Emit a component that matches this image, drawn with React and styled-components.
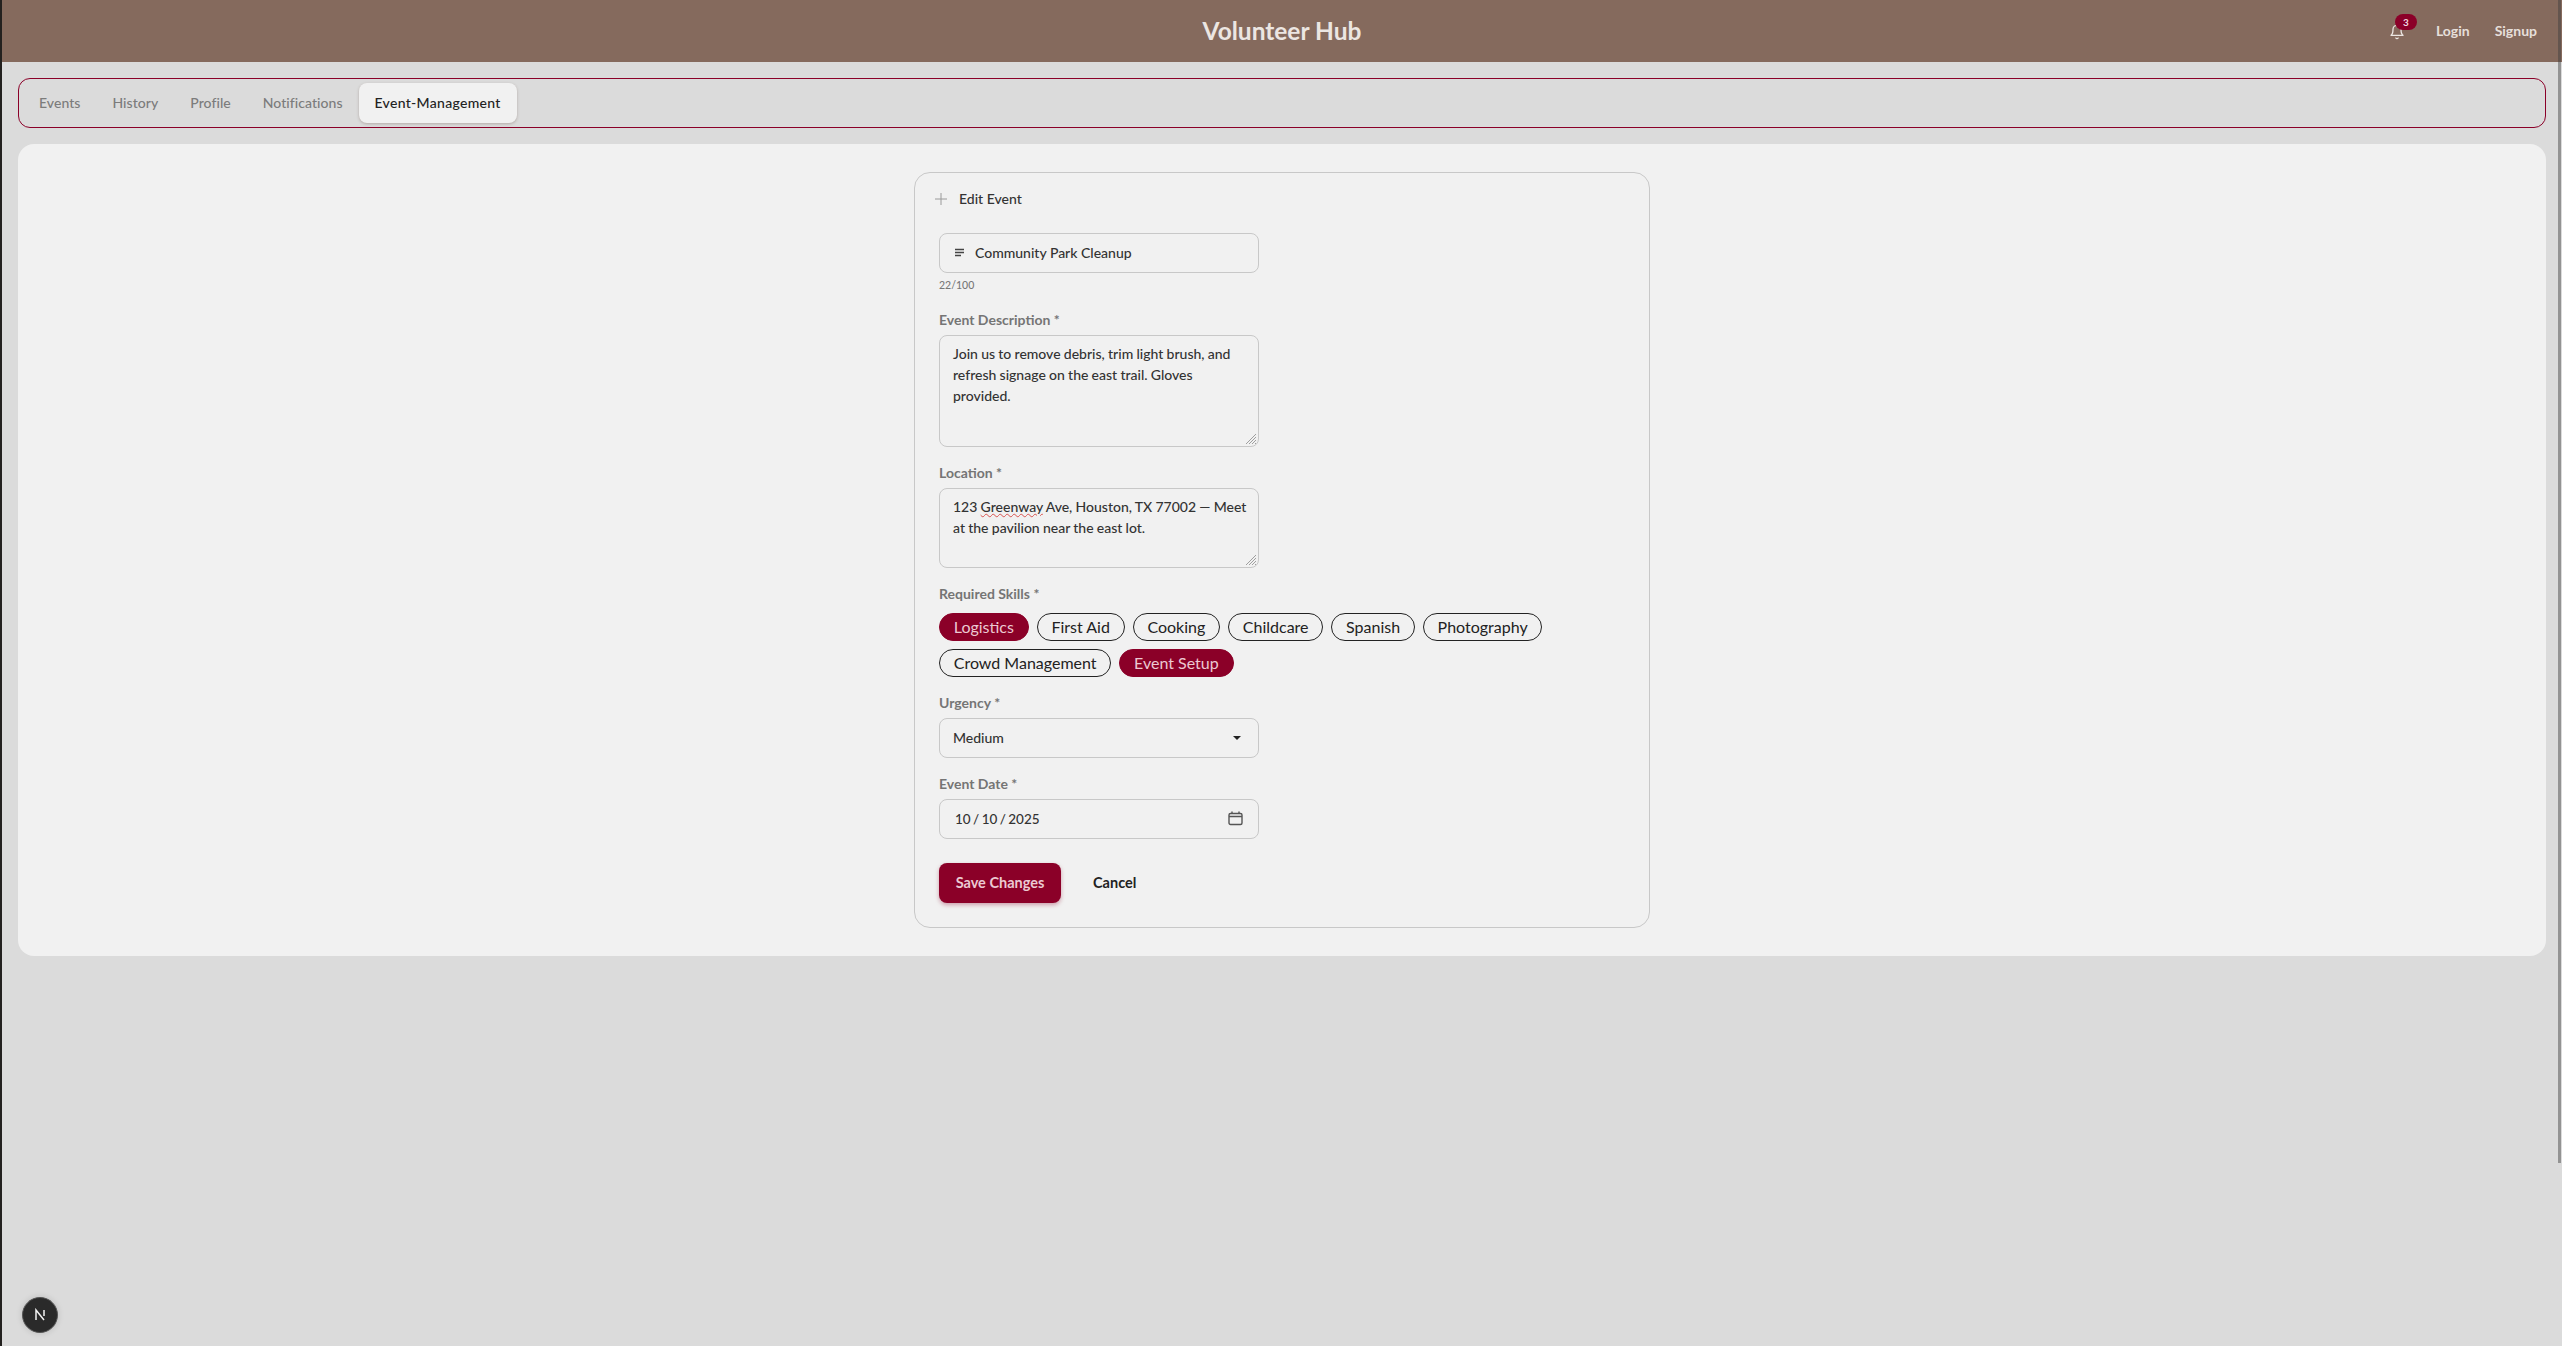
import styled, { createGlobalStyle } from "styled-components";

const crimson = "#8b0028";

const GlobalStyle = createGlobalStyle`
  html, body {
    margin: 0;
    height: 100%;
    overflow: hidden;
    background: #dbdbdb;
    font-family: "Lato", "Noto Sans", sans-serif;
    font-weight: 500;
    color: #222;
  }
  * { box-sizing: border-box; }
`;

const Shell = styled.div`
  min-height: 1346px;
  border-left: 2px solid #23211f;
  background: #dbdbdb;
`;
const Header = styled.header`
  height: 62px;
  padding-bottom: 2px;
  background: #856a5d;
  display: flex;
  align-items: center;
  justify-content: center;
  position: relative;
`;
const Brand = styled.h1`
  margin: 0;
  font-size: 24.5px;
  font-weight: 700;
  color: #ece6e2;
`;
const HeaderActions = styled.nav`
  position: absolute;
  right: 25px;
  top: 0;
  height: 60px;
  display: flex;
  align-items: center;
  gap: 25px;
`;
const BellWrap = styled.span`
  position: relative;
  display: flex;
  margin-right: 6px;
  top: 2px;
  color: #ece6e2;
`;
const Badge = styled.span`
  position: absolute;
  left: 6px;
  top: -10px;
  width: 22px;
  height: 16px;
  border-radius: 8px;
  background: ${crimson};
  color: #f0d8de;
  font-size: 10px;
  font-weight: 700;
  display: flex;
  align-items: center;
  justify-content: center;
`;
const NavLink = styled.a`
  font-size: 14px;
  font-weight: 700;
  color: #e6dfda;
`;
const Content = styled.main`
  padding: 16px 16px 0;
  display: flex;
  flex-direction: column;
  gap: 16px;
`;
const Tabs = styled.div`
  height: 50px;
  border: 1px solid ${crimson};
  border-radius: 12px;
  padding: 4px;
  display: flex;
`;
const Tab = styled.button`
  height: 40px;
  border: none;
  border-radius: 8px;
  padding: 0 16px 1px;
  font-family: inherit;
  font-size: 14px;
  font-weight: 500;
  letter-spacing: ${(p) => (p.$active ? "0.3px" : "0.05px")};
  background: ${(p) => (p.$active ? "#f1f1f1" : "transparent")};
  color: ${(p) => (p.$active ? "#222" : "#7c7c7c")};
  box-shadow: ${(p) => (p.$active ? "0 1px 3px rgba(90, 60, 50, 0.3)" : "none")};
`;
const Panel = styled.section`
  height: 812px;
  background: #f1f1f1;
  border-radius: 16px;
  padding: 28px 0;
  display: flex;
  justify-content: center;
`;
const Card = styled.div`
  width: 736px;
  height: 756px;
  border: 1px solid #c8c8c8;
  border-radius: 16px;
  padding: 16px 24px;
`;
const CardTitle = styled.div`
  display: flex;
  align-items: center;
  gap: 12px;
  height: 19px;
  margin: 0 0 25px -4px;
  font-size: 14px;
  color: #333;
`;
const Field = styled.div`
  width: 320px;
  height: 40px;
  border: 1px solid #c8c8c8;
  border-radius: 8px;
  padding: 0 14px 1px;
  display: flex;
  align-items: center;
  gap: 10px;
  font-size: 14px;
  color: #333;
`;
const SelectField = styled(Field)`
  padding-left: 13px;
  justify-content: space-between;
`;
const DateField = styled(Field)`
  padding-left: 15px;
  padding-right: 15px;
  font-size: 13.5px;
  word-spacing: -1px;
  justify-content: space-between;
`;
const Counter = styled.div`
  font-size: 10.5px;
  color: #777;
  margin-top: 4px;
  height: 16px;
  line-height: 16px;
`;
const Label = styled.label`
  display: block;
  font-size: 14px;
  font-weight: 700;
  color: #757575;
  height: 18px;
  line-height: 17px;
  margin: ${(p) => p.$top}px 0 6px;
`;
const TextBox = styled.div`
  position: relative;
  width: 320px;
  height: ${(p) => p.$height}px;
  border: 1px solid #c8c8c8;
  border-radius: 8px;
  padding: 7px 8px 8px 13px;
  font-size: 14px;
  line-height: 21px;
  word-spacing: -0.3px;
  color: #333;
`;
const Grip = styled.svg`
  position: absolute;
  right: 1px;
  bottom: 1px;
`;
const Misspelled = styled.span`
  text-decoration: underline wavy #d9534f 1px;
`;
const Chips = styled.div`
  display: flex;
  flex-wrap: wrap;
  gap: 8px;
  margin-top: 10px;
`;
const Chip = styled.span`
  height: 28px;
  border-radius: 14px;
  padding: 0 13.75px 1px;
  font-size: 16px;
  font-weight: 400;
  display: flex;
  align-items: center;
  border: 1px solid ${(p) => (p.$on ? crimson : "#222")};
  background: ${(p) => (p.$on ? crimson : "transparent")};
  color: ${(p) => (p.$on ? "#ecc9d2" : "#222")};
`;
const Caret = styled.span`
  width: 0;
  height: 0;
  margin-right: 3px;
  border-left: 4px solid transparent;
  border-right: 4px solid transparent;
  border-top: 4px solid #222;
`;
const Actions = styled.div`
  display: flex;
  align-items: center;
  gap: 8px;
  margin-top: 24px;
`;
const SaveButton = styled.button`
  height: 40px;
  width: 122px;
  border: none;
  border-radius: 8px;
  padding: 0 0 1px;
  background: ${crimson};
  color: #ecc9d2;
  font-family: inherit;
  font-size: 14.5px;
  font-weight: 700;
  box-shadow: 0 2px 4px rgba(139, 0, 40, 0.35);
`;
const CancelButton = styled.button`
  height: 40px;
  padding: 0 24px 1px;
  border: none;
  background: transparent;
  color: #222;
  font-family: inherit;
  font-size: 14.5px;
  font-weight: 700;
`;
const ScrollThumb = styled.div`
  position: fixed;
  top: 0;
  right: 1px;
  width: 3px;
  height: 1163px;
  background: rgba(60, 60, 60, 0.45);
`;
const DevBadge = styled.div`
  position: fixed;
  left: 22px;
  bottom: 13px;
  width: 36px;
  height: 36px;
  border-radius: 50%;
  background: #2a2a2a;
  border: 1px solid #555;
  box-shadow: 0 0 6px rgba(0, 0, 0, 0.15);
  display: flex;
  align-items: center;
  justify-content: center;
`;

const skills = [
  ["Logistics", true],
  ["First Aid", false],
  ["Cooking", false],
  ["Childcare", false],
  ["Spanish", false],
  ["Photography", false],
  ["Crowd Management", false],
  ["Event Setup", true],
];
const tabs = ["Events", "History", "Profile", "Notifications", "Event-Management"];

const ResizeGrip = () => (
  <Grip width="12" height="12" viewBox="0 0 12 12" stroke="#8a8a8a" strokeWidth="0.8">
    <path d="M1 11 11 1M4 11l7-7M7 11l4-4M10 11l1-1" />
  </Grip>
);

export default function App() {
  return (
    <Shell>
      <GlobalStyle />
      <Header>
        <Brand>Volunteer Hub</Brand>
        <HeaderActions>
          <BellWrap>
            <svg width="16" height="16" viewBox="0 0 24 24" fill="none" stroke="currentColor" strokeWidth="2" strokeLinecap="round" strokeLinejoin="round">
              <path d="M6 8a6 6 0 0 1 12 0c0 7 3 9 3 9H3s3-2 3-9" />
              <path d="M10.3 21a1.94 1.94 0 0 0 3.4 0" />
            </svg>
            <Badge>3</Badge>
          </BellWrap>
          <NavLink>Login</NavLink>
          <NavLink>Signup</NavLink>
        </HeaderActions>
      </Header>
      <Content>
        <Tabs>
          {tabs.map((t) => (
            <Tab key={t} $active={t === "Event-Management"}>{t}</Tab>
          ))}
        </Tabs>
        <Panel>
          <Card>
            <CardTitle>
              <svg width="12" height="12" viewBox="0 0 12 12" stroke="#9a9a9a" strokeWidth="1">
                <path d="M6 0v12M0 6h12" />
              </svg>
              Edit Event
            </CardTitle>
            <Field>
              <svg width="11" height="10" viewBox="0 0 11 10" stroke="#444" strokeWidth="1.4">
                <path d="M1 1.5h9M1 4.5h9M1 7.5h6" />
              </svg>
              Community Park Cleanup
            </Field>
            <Counter>22/100</Counter>
            <Label $top={18}>Event Description *</Label>
            <TextBox $height={112}>
              Join us to remove debris, trim light brush, and refresh signage on the east trail. Gloves provided.
              <ResizeGrip />
            </TextBox>
            <Label $top={17}>Location *</Label>
            <TextBox $height={80}>
              123 <Misspelled>Greenway</Misspelled> Ave, Houston, TX 77002 — Meet at the pavilion near the east lot.
              <ResizeGrip />
            </TextBox>
            <Label $top={17}>Required Skills *</Label>
            <Chips>
              {skills.map(([name, on]) => (
                <Chip key={name} $on={on}>{name}</Chip>
              ))}
            </Chips>
            <Label $top={17}>Urgency *</Label>
            <SelectField>
              Medium
              <Caret />
            </SelectField>
            <Label $top={17}>Event Date *</Label>
            <DateField>
              10 / 10 / 2025
              <svg width="15" height="15" viewBox="0 0 15 15" fill="none" stroke="#555" strokeWidth="1.4">
                <rect x="1" y="2.5" width="13" height="11" rx="1.5" />
                <path d="M1 5.5h13M4 .5v2M11 .5v2" />
              </svg>
            </DateField>
            <Actions>
              <SaveButton>Save Changes</SaveButton>
              <CancelButton>Cancel</CancelButton>
            </Actions>
          </Card>
        </Panel>
      </Content>
      <ScrollThumb />
      <DevBadge>
        <svg width="14" height="14" viewBox="0 0 14 14" fill="none" stroke="#f2f2f2" strokeWidth="1.5">
          <path d="M3 12V2l8 10M11 2v6" />
        </svg>
      </DevBadge>
    </Shell>
  );
}
